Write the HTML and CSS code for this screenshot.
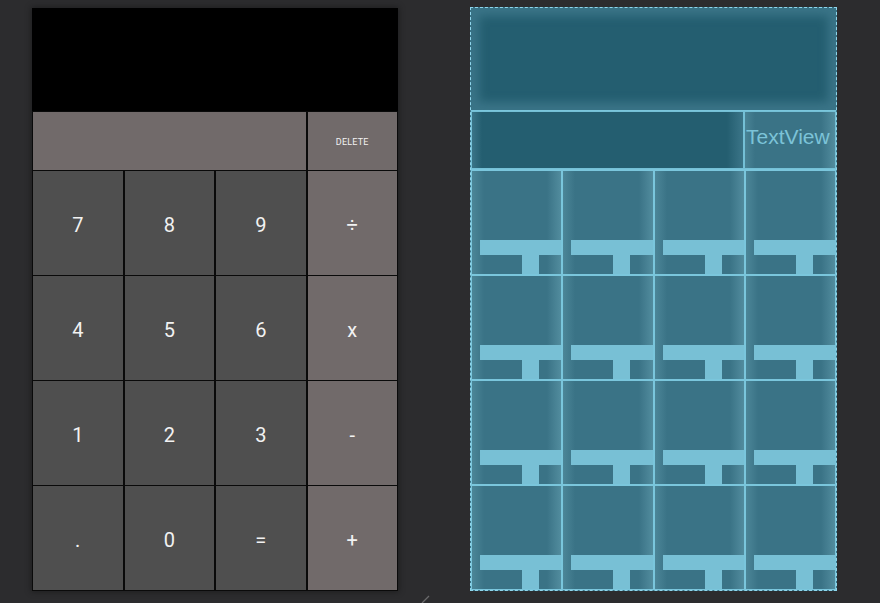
FILE: index.html
```html
<!DOCTYPE html>
<html>
<head>
<meta charset="utf-8">
<link rel="stylesheet" href="styles.css">
</head>
<body>
<div class="stage">
  <div class="phone">
    <div class="display"></div>
    <div class="keys">
      <div class="key op span3"></div>
      <div class="key op del">DELETE</div>
      <div class="key">7</div><div class="key">8</div><div class="key">9</div><div class="key op">÷</div>
      <div class="key">4</div><div class="key">5</div><div class="key">6</div><div class="key op">x</div>
      <div class="key">1</div><div class="key">2</div><div class="key">3</div><div class="key op">-</div>
      <div class="key">.</div><div class="key">0</div><div class="key">=</div><div class="key op">+</div>
    </div>
  </div>

  <div class="bp">
    <div class="bp-head"></div>
    <div class="bp-row2">
      <div class="bp-blank"></div>
      <div class="bp-tv">TextView</div>
    </div>
    <div class="bp-grid">
      <div class="bp-cell"><span class="t-bar"></span><span class="t-stem"></span></div>
      <div class="bp-cell"><span class="t-bar"></span><span class="t-stem"></span></div>
      <div class="bp-cell"><span class="t-bar"></span><span class="t-stem"></span></div>
      <div class="bp-cell"><span class="t-bar"></span><span class="t-stem"></span></div>
      <div class="bp-cell"><span class="t-bar"></span><span class="t-stem"></span></div>
      <div class="bp-cell"><span class="t-bar"></span><span class="t-stem"></span></div>
      <div class="bp-cell"><span class="t-bar"></span><span class="t-stem"></span></div>
      <div class="bp-cell"><span class="t-bar"></span><span class="t-stem"></span></div>
      <div class="bp-cell"><span class="t-bar"></span><span class="t-stem"></span></div>
      <div class="bp-cell"><span class="t-bar"></span><span class="t-stem"></span></div>
      <div class="bp-cell"><span class="t-bar"></span><span class="t-stem"></span></div>
      <div class="bp-cell"><span class="t-bar"></span><span class="t-stem"></span></div>
      <div class="bp-cell"><span class="t-bar"></span><span class="t-stem"></span></div>
      <div class="bp-cell"><span class="t-bar"></span><span class="t-stem"></span></div>
      <div class="bp-cell"><span class="t-bar"></span><span class="t-stem"></span></div>
      <div class="bp-cell"><span class="t-bar"></span><span class="t-stem"></span></div>
    </div>
  </div>
</div>
<svg class="resize" width="10" height="10" viewBox="0 0 10 10"><line x1="1" y1="9" x2="8" y2="2" stroke="#6a6a6c" stroke-width="1.2"/></svg>
</body>
</html>
```

FILE: styles.css
```css
html, body {
  margin: 0;
  padding: 0;
  width: 880px;
  height: 603px;
  overflow: hidden;
  background: #2c2c2e;
  font-family: Roboto, "Liberation Sans", sans-serif;
}

.stage {
  display: flex;
  align-items: flex-start;
  gap: 72px;
  padding: 8px 0 0 32px;
}

/* ---------- design view ---------- */
.phone {
  width: 366px;
  background: #000;
  box-shadow: 0 0 6px 1px rgba(0, 0, 0, 0.35);
}

.display {
  height: 103px;
  background: #000;
}

.keys {
  display: grid;
  grid-template-columns: repeat(4, 1fr);
  grid-template-rows: 58px repeat(4, 104px);
  column-gap: 2px;
  row-gap: 1px;
  padding: 1px;
  background: #0a0a0a;
}

.key {
  background: #4f4f4f;
  color: #f2f2f2;
  font-size: 20px;
  display: flex;
  align-items: center;
  justify-content: center;
  padding-top: 3px;
}

.key.op {
  background: #716a6a;
}

.span3 {
  grid-column: span 3;
}

.key.del {
  font-size: 9px;
  letter-spacing: 0.2px;
  padding-top: 2px;
}

/* ---------- blueprint view ---------- */
.bp {
  width: 365px;
  margin-top: -1px;
  border: 1px dashed #8fd6ec;
  background: #3a7386;
}

.bp-head {
  height: 102px;
  background: #245e70;
  box-shadow: inset 0 0 10px 8px #3a7487;
  border-bottom: 1px solid #7ac6dc;
}

.bp-row2 {
  display: flex;
  height: 58px;
  border-bottom: 1px solid #7ac6dc;
}

.bp-blank {
  flex: 0 0 271px;
  border: 1px solid #74c0d6;
  background: linear-gradient(to right, #3b7588 0, #245e70 10px, #245e70 calc(100% - 16px), #3b7588 100%);
}

.bp-tv {
  flex: 1;
  border: 1px solid #74c0d6;
  background: linear-gradient(to right, #4a8496 0, #3a7386 10px, #3a7386 calc(100% - 14px), #528c9e 100%);
  color: #7cc3d8;
  font-family: "Liberation Sans", Arial, sans-serif;
  font-size: 21px;
  display: flex;
  align-items: center;
  padding-left: 1px;
  padding-bottom: 6px;
  box-sizing: border-box;
}

.bp-grid {
  display: grid;
  grid-template-columns: repeat(4, 1fr);
  grid-template-rows: repeat(4, 105px);
}

.bp-cell {
  border: 1px solid #7ac6dc;
  background: linear-gradient(to right, #4c8698 0, #3a7386 12px, #3a7386 calc(100% - 14px), #528c9e 100%);
  display: flex;
  flex-direction: column;
  justify-content: flex-end;
  overflow: hidden;
}

.t-bar {
  display: block;
  height: 15px;
  margin-left: 8px;
  background: #78c0d5;
}

.t-stem {
  display: block;
  width: 17px;
  height: 19px;
  margin-left: 50px;
  background: #78c0d5;
}

.resize {
  position: absolute;
  left: 421px;
  top: 594px;
}
```
